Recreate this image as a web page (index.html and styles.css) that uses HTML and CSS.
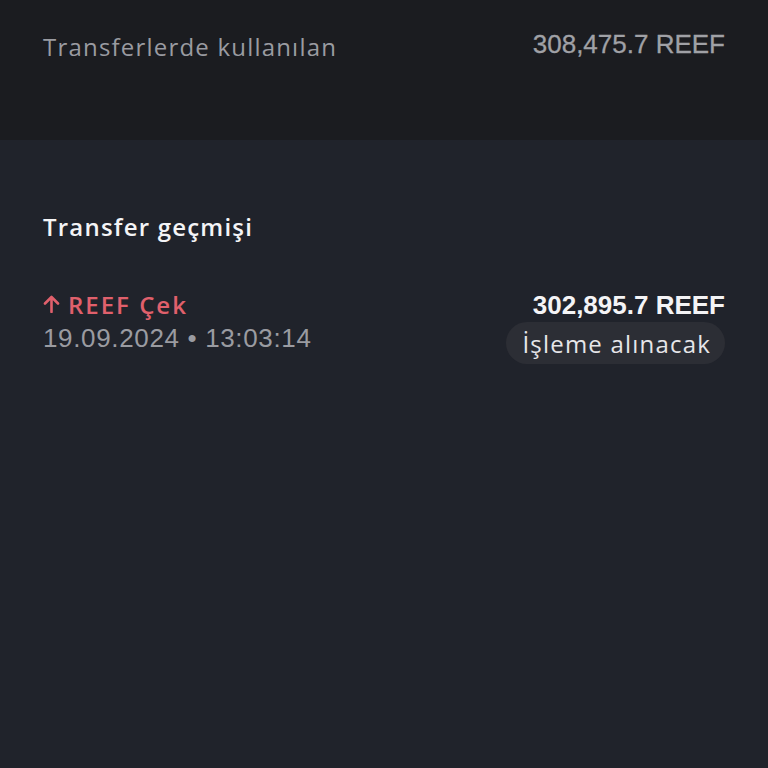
FILE: index.html
```html
<!DOCTYPE html>
<html lang="tr">
<head>
    <meta charset="UTF-8">
    <meta name="viewport" content="width=device-width, initial-scale=1.0">
    <title>Transfer geçmişi</title>
    <link rel="stylesheet" href="styles.css">
</head>
<body>

    <div class="summary">
        <div class="summary-row">
            <span class="summary-label">Transferlerde kullanılan</span>
            <span class="summary-value">308,475.7 REEF</span>
        </div>
    </div>

    <div class="history">
        <h2 class="history-title">Transfer geçmişi</h2>

        <div class="tx">
            <div class="tx-left">
                <div class="tx-type">
                    <svg class="tx-arrow" width="17" height="18" viewBox="0 0 17 18">
                        <path d="M8.5 17V2.5M2 8.5l6.5-6.5 6.5 6.5" fill="none" stroke="currentColor" stroke-width="2.6" stroke-linecap="round" stroke-linejoin="round"/>
                    </svg>
                    REEF Çek
                </div>
                <div class="tx-date">19.09.2024 • 13:03:14</div>
            </div>
            <div class="tx-right">
                <div class="tx-amount">302,895.7 REEF</div>
                <div class="tx-status">İşleme alınacak</div>
            </div>
        </div>
    </div>

</body>
</html>
```

FILE: styles.css
```css
body {
    margin: 0;
    background-color: #20232b;
    font-family: "Open Sans", "Noto Sans", sans-serif;
    color: #ffffff;
    min-height: 100vh;
}

.summary {
    background-color: #1b1c20;
    height: 140px;
    padding: 0 43px;
    box-sizing: border-box;
}

.summary-row {
    display: flex;
    justify-content: space-between;
    align-items: flex-start;
    padding-top: 29px;
    line-height: 30px;
}

.summary-label {
    font-size: 24px;
    color: #9a9ba1;
    letter-spacing: 1.2px;
    margin-top: 3px;
}

.summary-value {
    font-family: "Liberation Sans", Arial, sans-serif;
    font-size: 26px;
    color: #a0a1a6;
    -webkit-text-stroke: 0.3px #a0a1a6;
}

.history {
    padding: 0 43px;
}

.history-title {
    margin: 0;
    padding-top: 72px;
    font-size: 24px;
    line-height: 30px;
    font-weight: 600;
    color: #f4f4f6;
    letter-spacing: 1.2px;
}

.tx {
    display: flex;
    justify-content: space-between;
    align-items: flex-start;
    margin-top: 48px;
}

.tx-type {
    display: flex;
    align-items: center;
    gap: 8px;
    font-size: 24px;
    font-weight: 600;
    color: #e0606c;
    line-height: 30px;
    letter-spacing: 2px;
}

.tx-arrow {
    color: #e0606c;
    margin-top: -2px;
}

.tx-date {
    font-family: "Liberation Sans", Arial, sans-serif;
    font-size: 26px;
    line-height: 30px;
    color: #9a9ba1;
    margin-top: 3px;
    letter-spacing: 0.65px;
}

.tx-right {
    display: flex;
    flex-direction: column;
    align-items: flex-end;
}

.tx-amount {
    font-family: "Liberation Sans", Arial, sans-serif;
    font-size: 26px;
    font-weight: 700;
    color: #f4f4f6;
    line-height: 30px;
}

.tx-status {
    margin-top: 2px;
    background-color: #2c2e35;
    color: #e6e6e9;
    font-size: 24px;
    line-height: 30px;
    padding: 7px 14px 5px 16px;
    border-radius: 21px;
    letter-spacing: 1.2px;
}
```
